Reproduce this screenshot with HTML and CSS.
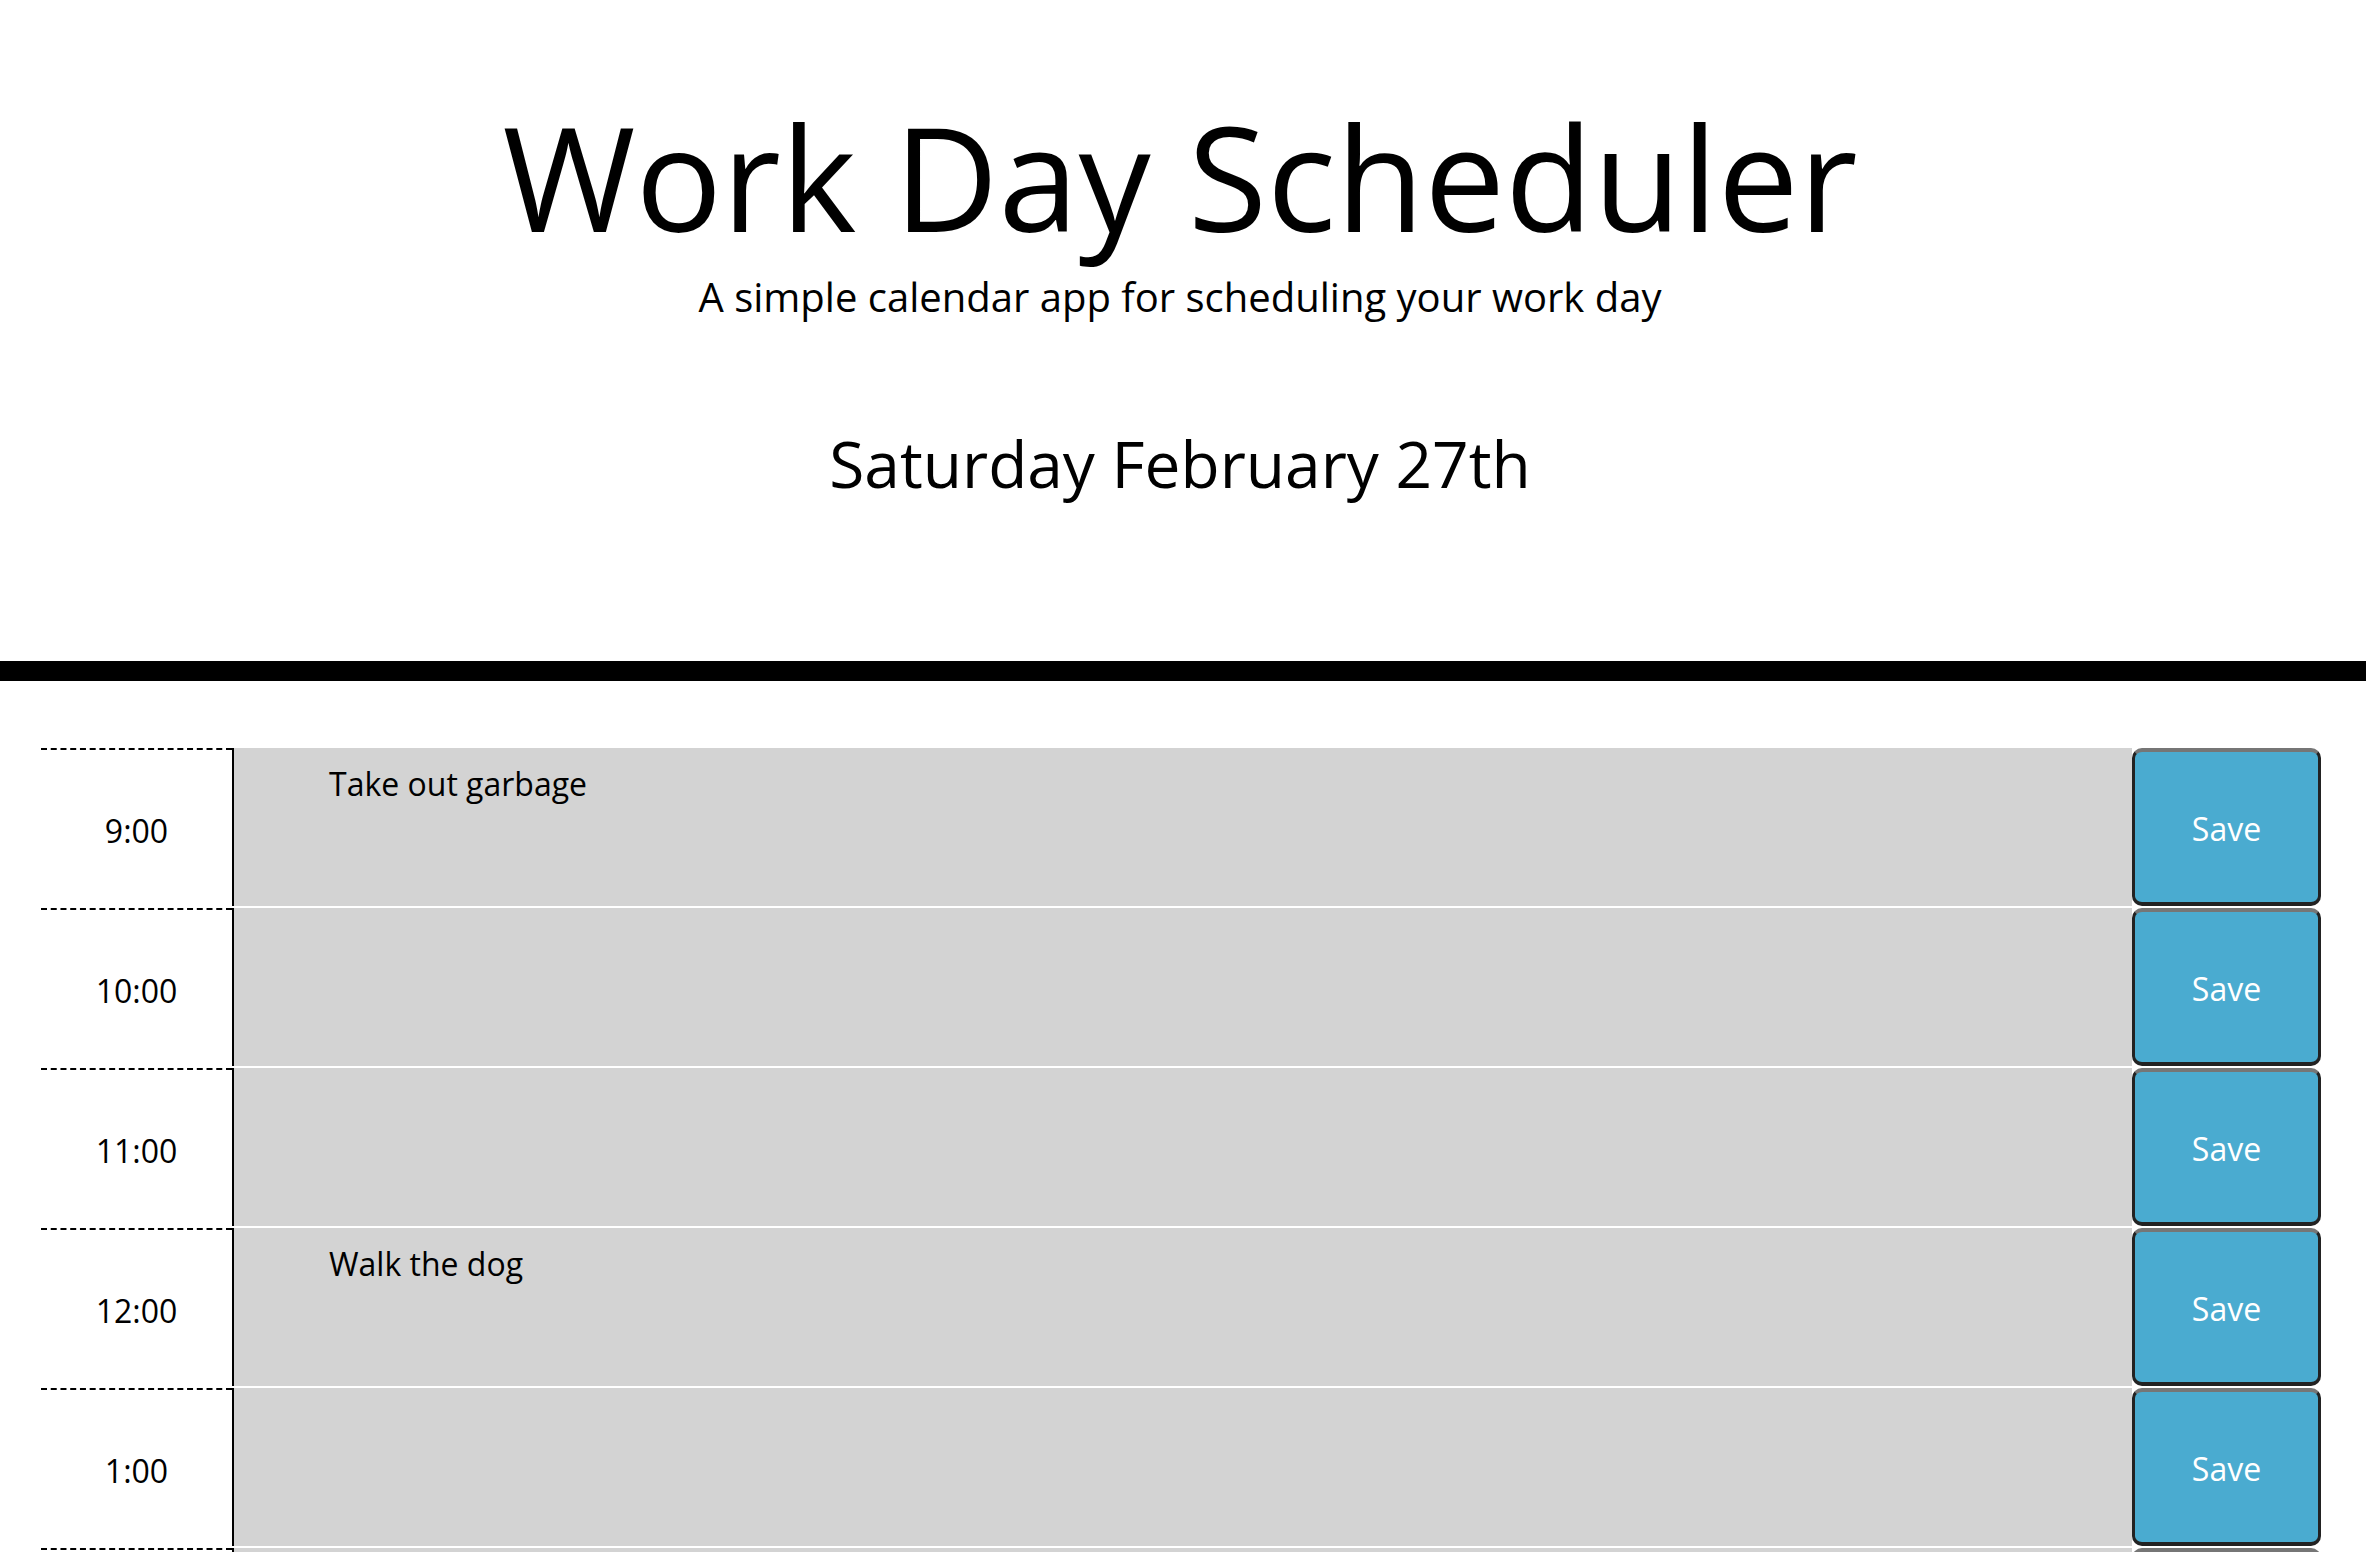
FILE: index.html
```html
<!DOCTYPE html>
<html lang="en">
<head>
<meta charset="utf-8">
<title>Work Day Scheduler</title>
<link rel="stylesheet" href="styles.css">
</head>
<body>
<header class="jumbotron">
  <h1 class="title">Work Day Scheduler</h1>
  <p class="lead">A simple calendar app for scheduling your work day</p>
  <p class="current-day">Saturday February 27th</p>
</header>
<main class="container">
  <div class="row"><div class="hour">9:00</div><textarea class="description past">Take out garbage</textarea><button class="save-btn">Save</button></div>
  <div class="row"><div class="hour">10:00</div><textarea class="description past"></textarea><button class="save-btn">Save</button></div>
  <div class="row"><div class="hour">11:00</div><textarea class="description past"></textarea><button class="save-btn">Save</button></div>
  <div class="row"><div class="hour">12:00</div><textarea class="description past">Walk the dog</textarea><button class="save-btn">Save</button></div>
  <div class="row"><div class="hour">1:00</div><textarea class="description past"></textarea><button class="save-btn">Save</button></div>
  <div class="row"><div class="hour">2:00</div><textarea class="description past"></textarea><button class="save-btn">Save</button></div>
  <div class="row"><div class="hour">3:00</div><textarea class="description past"></textarea><button class="save-btn">Save</button></div>
  <div class="row"><div class="hour">4:00</div><textarea class="description past"></textarea><button class="save-btn">Save</button></div>
  <div class="row"><div class="hour">5:00</div><textarea class="description past"></textarea><button class="save-btn">Save</button></div>
</main>
</body>
</html>
```

FILE: styles.css
```css
* { box-sizing: border-box; }

html, body {
  margin: 0;
  padding: 0;
  background: #ffffff;
  color: #000000;
  font-family: "Open Sans", "Noto Sans", "Liberation Sans", sans-serif;
}

.jumbotron {
  text-align: center;
  padding: 90px 6px 149px 0;
  border-bottom: 20px solid #000000;
}

.title {
  margin: 0;
  font-size: 144px;
  font-weight: 400;
  line-height: 1.2;
}

.lead {
  margin: 4px 0 0;
  font-size: 40px;
  font-weight: 400;
  line-height: 1.5;
}

.current-day {
  margin: 89px 0 0;
  font-size: 64px;
  font-weight: 400;
  line-height: 1.5;
}

.container {
  padding: 67px 45px 0 41px;
}

.row {
  display: grid;
  grid-template-columns: 191px 1fr 189px;
  height: 160px;
}

.hour {
  border-top: 2px dashed #000000;
  display: flex;
  align-items: center;
  justify-content: center;
  font-size: 32px;
  padding-top: 3px;
}

.description {
  height: 158px;
  margin: 0;
  border: none;
  border-left: 2px solid #000000;
  resize: none;
  font-family: inherit;
  font-size: 32px;
  line-height: 1.5;
  padding: 12px 20px 0 95px;
  color: #000000;
  overflow: hidden;
}

.past { background: #d3d3d3; }

.save-btn {
  height: 158px;
  margin: 0;
  background: #4aabd0;
  color: #ffffff;
  font-family: inherit;
  font-size: 32px;
  border-style: solid;
  border-width: 4px 3px;
  border-color: #767676 #222222 #222222 #222222;
  border-radius: 10px;
  padding: 3px 0 0;
}
```
